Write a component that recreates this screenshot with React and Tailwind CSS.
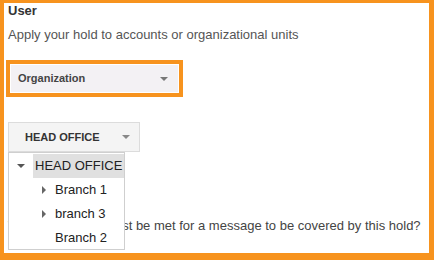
import React from 'react';

const Caret = ({ dir = 'down', className = '' }) => (
    <svg width="8" height="8" viewBox="0 0 8 8" className={className}>
        {dir === 'down'
            ? <path d="M0 2 L8 2 L4 6 Z" fill="currentColor" />
            : <path d="M2 0 L6 4 L2 8 Z" fill="currentColor" />}
    </svg>
);

const branches = [
    { name: 'Branch 1', children: true },
    { name: 'branch 3', children: true },
    { name: 'Branch 2', children: false },
];

export default function App() {
    return (
        <div className="w-[434px] h-[260px] bg-[#f7931e] pt-[3px] pl-[4px] pr-[5px] pb-[7px] font-['Liberation_Sans',Arial,sans-serif]">
            <div className="relative h-full bg-white pl-[4px]">
                <h1 className="text-[13px] font-bold text-[#333] leading-[16px]">User</h1>
                <p className="text-[13px] text-[#555] leading-[16px] mt-[8px]">
                    Apply your hold to accounts or organizational units
                </p>
                <div className="mt-[17px] w-[177px] border-[4px] border-[#f7931e] p-[1px] -ml-[2px]">
                    <div className="flex items-center justify-between h-[27px] bg-[#f3f1f4] pl-[7px] pr-[10px]">
                        <span className="text-[11px] font-bold text-[#444]">Organization</span>
                        <Caret className="text-[#777]" />
                    </div>
                </div>
                <div className="mt-[25px] flex items-center justify-between w-[132px] h-[30px] border border-[#dcdcdc] bg-[#f4f4f4] pl-[16px] pr-[9px]">
                    <span className="text-[11px] font-bold text-[#333]">HEAD OFFICE</span>
                    <Caret className="text-[#888]" />
                </div>
                <p className="mt-[66px] text-[13px] text-[#444] leading-[16px] whitespace-nowrap">
                    What conditions must be met for a message to be covered by this hold?
                </p>
                <div className="absolute left-[4px] top-[149px] w-[117px] h-[98px] bg-white border border-[#cfcfcf] pt-[1px]">
                    <div className="flex items-center h-[24px]">
                        <div className="w-[24px] flex justify-center">
                            <Caret className="text-[#555]" />
                        </div>
                        <div className="flex-1 h-full flex items-center bg-[#e0e0e0] pl-[2px] text-[13px] text-[#222] whitespace-nowrap">
                            HEAD OFFICE
                        </div>
                    </div>
                    {branches.map((b) => (
                        <div key={b.name} className="flex items-center h-[24px]">
                            <div className="w-[24px]" />
                            <div className="w-[22px] flex justify-center">
                                {b.children && <Caret dir="right" className="text-[#666]" />}
                            </div>
                            <span className="text-[13px] text-[#222]">{b.name}</span>
                        </div>
                    ))}
                </div>
            </div>
        </div>
    );
}
